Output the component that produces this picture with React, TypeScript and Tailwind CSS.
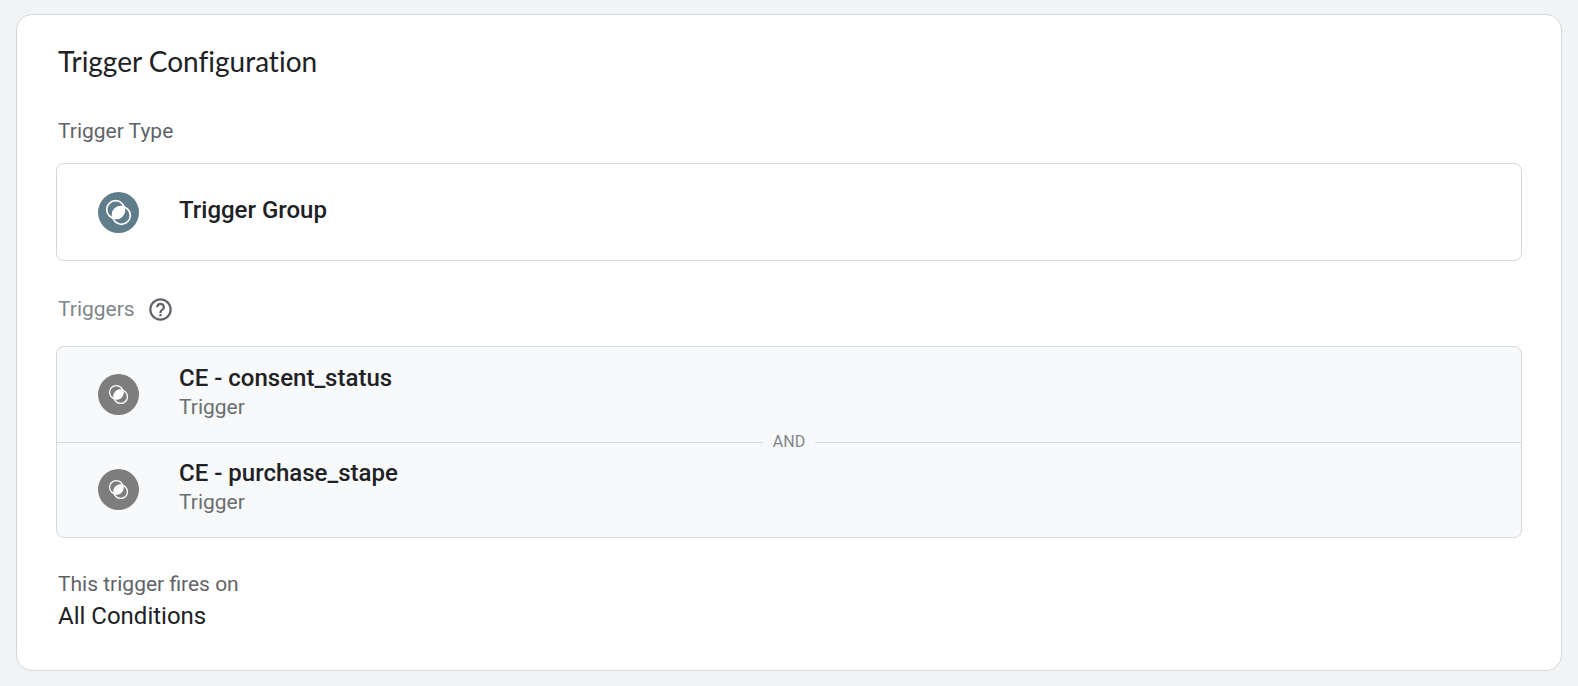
import { MdHelpOutline } from "react-icons/md";

function GroupIcon({ tone, small }: { tone: string; small?: boolean }) {
  return (
    <svg viewBox="-20.5 -20.5 41 41" className={`size-[41px] shrink-0 ${tone}`} aria-hidden="true">
      <circle r="20.5" fill="currentColor" />
      <g transform={small ? "scale(0.76)" : undefined} fill="none" stroke="#fff" strokeWidth="1.7">
        <circle cx="-2.9" cy="-2.9" r="8.9" />
        <circle cx="2.9" cy="2.9" r="8.9" />
        <ellipse rx="7.1" ry="5.7" transform="rotate(-45)" fill="#fff" stroke="none" />
      </g>
    </svg>
  );
}

function TriggerRow({ name }: { name: string }) {
  return (
    <li className="flex h-[95px] items-center gap-10 px-[41px]">
      <GroupIcon tone="text-[#7d7d7d]" small />
      <div className="-mt-1">
        <div className="text-2xl leading-7 font-medium text-[#202124]">{name}</div>
        <div className="text-[21px] leading-[30px] text-[#6b6e71]">Trigger</div>
      </div>
    </li>
  );
}

export default function App() {
  return (
    <main className="min-h-screen bg-[#f1f3f4] px-4 py-3.5 font-['Roboto',sans-serif]">
      <section className="rounded-2xl border border-[#d5d8da] bg-white px-[39px] pt-[26px] pb-[38px]">
        <h1 className="px-0.5 font-['Lato',sans-serif] text-[28px] leading-10 text-[#202124] [font-variant-ligatures:none]">
          Trigger Configuration
        </h1>

        <h2 className="mt-[34px] px-0.5 text-[21px] leading-8 text-[#5f6368]">Trigger Type</h2>
        <div className="mt-4 flex h-[98px] items-center gap-10 rounded-lg border border-[#d5d8da] px-[41px]">
          <GroupIcon tone="text-[#607d8b]" />
          <span className="pb-1 text-2xl leading-8 font-medium text-[#202124]">Trigger Group</span>
        </div>

        <div className="mt-8 flex items-center gap-3 px-0.5">
          <h2 className="text-[21px] leading-8 text-[#80868b]">Triggers</h2>
          <button type="button" aria-label="Help" className="text-[#5f6368]">
            <MdHelpOutline className="size-[27px]" />
          </button>
        </div>
        <ul className="mt-[21px] rounded-lg border border-[#d5d8da] bg-[#f8f9fa]">
          <TriggerRow name="CE - consent_status" />
          <li className="-my-3 flex h-6 items-center gap-2.5 text-base text-[#80868b]">
            <span className="h-px flex-1 bg-[#d5d8da]" />
            AND
            <span className="h-px flex-1 bg-[#d5d8da]" />
          </li>
          <TriggerRow name="CE - purchase_stape" />
        </ul>

        <h2 className="mt-[30px] px-0.5 text-[21px] leading-8 text-[#5f6368]">This trigger fires on</h2>
        <p className="px-0.5 text-2xl leading-8 text-[#202124]">All Conditions</p>
      </section>
    </main>
  );
}
